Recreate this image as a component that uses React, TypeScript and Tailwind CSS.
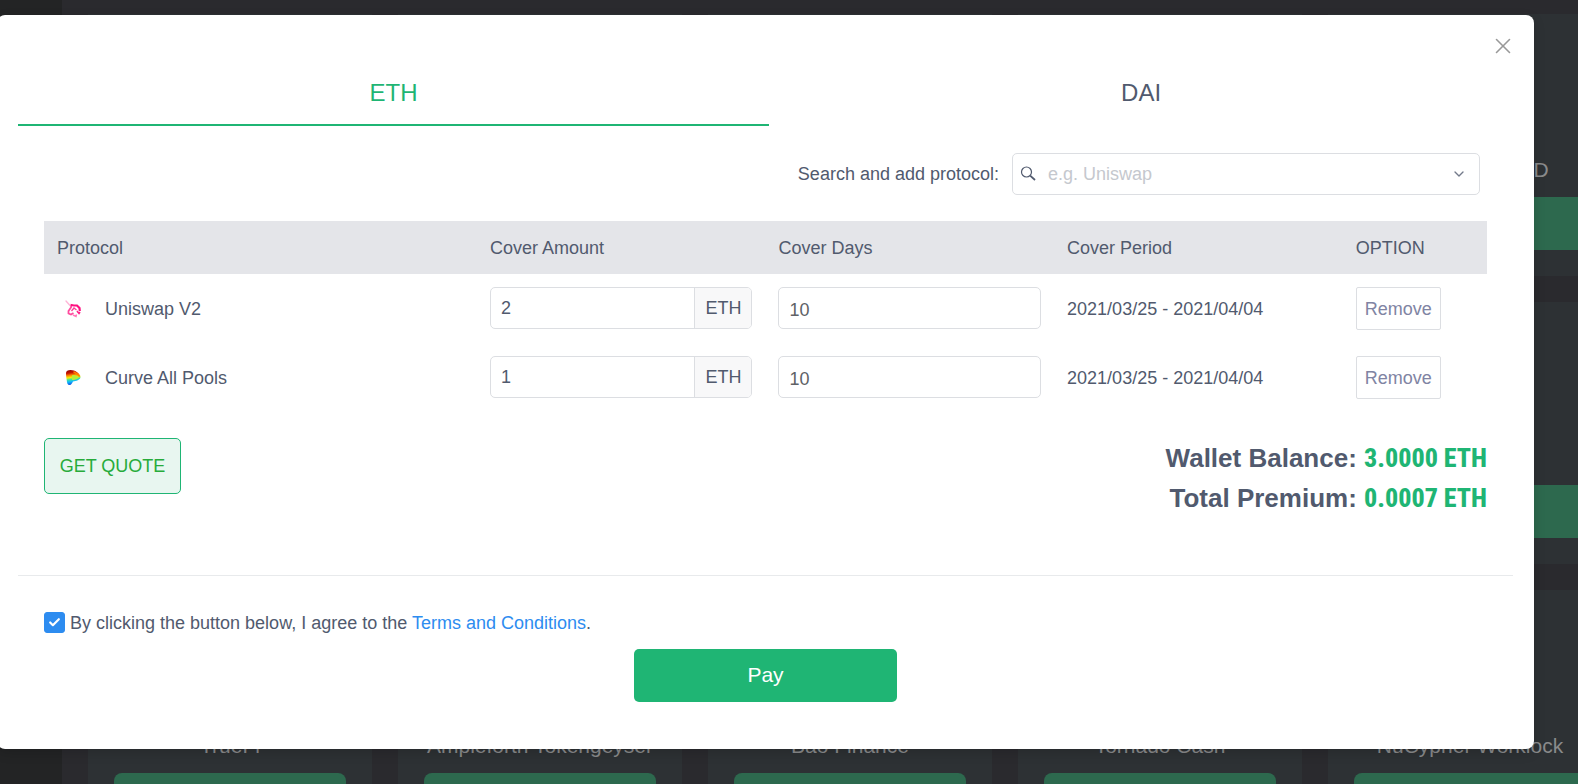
import { useState } from "react";
import { Check, ChevronDown, X } from "lucide-react";

const UniswapLogo = () => (
  <svg className="h-5 w-5 shrink-0" viewBox="0 0 20 20" fill="none" aria-hidden="true">
    <path d="M2 2 6 6.500" stroke="#ffb3d6" strokeWidth="1.300" strokeLinecap="round" />
    <path d="M7.500 5 7 8.500 4.500 12 4.500 14.500 7 15.500 9.500 14" stroke="#ff4a9e" strokeWidth="1.800" />
    <path d="M7 6 10 6.500 13 6.500 15.500 9 15.800 12" stroke="#ff0f80" strokeWidth="2.200" />
    <path d="M7.500 12 10 9 12.500 11" stroke="#ff3a96" strokeWidth="1.300" />
    <path d="M9 16 12 17.500 12.500 15.500" stroke="#ff7dbb" strokeWidth="1.500" />
    <path d="M13 12 15 14.500 16 13" stroke="#ff1d88" strokeWidth="1.600" />
  </svg>
);

const CurveLogo = () => (
  <svg className="h-5 w-5 shrink-0" viewBox="0 0 20 20" fill="none" aria-hidden="true">
    <defs>
      <linearGradient id="curve-body" x1="0.1" y1="0" x2="0.25" y2="1">
        <stop offset="0" stopColor="#8c0000" />
        <stop offset="0.22" stopColor="#c81400" />
        <stop offset="0.38" stopColor="#ff8a00" />
        <stop offset="0.52" stopColor="#f4f000" />
        <stop offset="0.66" stopColor="#3fe0a0" />
        <stop offset="0.8" stopColor="#10b8ff" />
        <stop offset="1" stopColor="#0b4fe0" />
      </linearGradient>
    </defs>
    <path
      d="M2 5C2 3 4 2 6.500 2C11 2 16.500 5.500 16.500 9C16.500 12 12 13 9 13.500C8 15 7.500 17 5.500 17C3.500 17 3 15 2.700 12C2.300 9.500 2 7 2 5Z"
      fill="url(#curve-body)"
    />
    <path d="M8 7.500C10 6.500 13 7.500 15 9.500C13 11.500 10 12 8 12Z" fill="#b6ee3a" />
    <path d="M9.500 3.800C12 4.800 14.500 6.500 15.700 8.500" stroke="#ff7a00" strokeWidth="1.500" />
  </svg>
);

const SearchIcon = () => (
  <svg className="h-4 w-4 shrink-0" viewBox="0 0 16 16" fill="none" stroke="#515a6e" aria-hidden="true">
    <circle cx="6.500" cy="6" r="5" strokeWidth="1.200" />
    <path d="M10.200 9.700 15 14" strokeWidth="1.800" />
  </svg>
);

const protocols = [
  { id: "uniswap", name: "Uniswap V2", amount: "2", days: "10", period: "2021/03/25 - 2021/04/04", Logo: UniswapLogo },
  { id: "curve", name: "Curve All Pools", amount: "1", days: "10", period: "2021/03/25 - 2021/04/04", Logo: CurveLogo },
];

const cards = [
  "", "", "", "", "mStable - mUSD",
  "", "", "", "", "",
  "TrueFi", "Ampleforth Tokengeyser", "Bao Finance", "Tornado Cash", "NuCypher Worklock",
];

const Backdrop = () => (
  <div className="absolute inset-0 flex overflow-hidden bg-[#2a2a2e]" aria-hidden="true">
    <div className="w-[62px] shrink-0 bg-[#232425]" />
    <div className="grid shrink-0 auto-rows-[262px] grid-cols-[repeat(5,284px)] gap-[26px] px-[26px] pt-[14px]">
      {cards.map((name, i) => (
        <div key={i} className="flex flex-col justify-end bg-[#2d3134] p-[26px]">
          <div className="flex justify-center pb-[15px] text-[21px] leading-6 whitespace-nowrap text-[#898a8b]">
            {name}
          </div>
          <div className="h-[53px] rounded-lg bg-[#2d694e]" />
        </div>
      ))}
    </div>
  </div>
);

const App = () => {
  const [tab, setTab] = useState("ETH");
  const [agreed, setAgreed] = useState(true);

  return (
    <div className="relative min-h-screen overflow-hidden font-['Liberation_Sans',Arial,sans-serif] text-lg text-[#515a6e]">
      <Backdrop />

      <div
        role="dialog"
        aria-label="Buy cover"
        className="relative mt-[15px] mr-[44px] -ml-[3px] rounded-lg bg-white px-[21px] pt-[47px] pb-[47px] shadow-[0_4px_12px_rgba(0,0,0,0.15)]"
      >
        <button type="button" aria-label="Close" className="absolute top-[18px] right-[18px] text-[#999999]">
          <X className="h-[26px] w-[26px]" strokeWidth={1.5} />
        </button>

        {/* Currency tabs */}
        <div className="grid grid-cols-[101fr_100fr]" role="tablist">
          {["ETH", "DAI"].map((name) => (
            <button
              key={name}
              type="button"
              role="tab"
              aria-selected={tab === name}
              onClick={() => setTab(name)}
              className={
                tab === name
                  ? "h-16 border-b-2 border-[#1fb574] text-2xl text-[#1fb574]"
                  : "h-16 border-b-2 border-transparent text-2xl"
              }
            >
              {name}
            </button>
          ))}
        </div>

        <div className="px-[26px]">
          <div className="mt-[27px] flex items-center justify-end gap-[13px] pr-[7px]">
            <label htmlFor="protocol-search">Search and add protocol:</label>
            <div className="flex h-[42px] w-[468px] items-center rounded-[5px] border border-[#dcdee2] px-[7px]">
              <SearchIcon />
              <input
                id="protocol-search"
                type="text"
                placeholder="e.g. Uniswap"
                className="min-w-0 flex-1 px-3 outline-none placeholder:text-[#c5c8ce]"
              />
              <button type="button" aria-label="Show protocols" className="px-[5px] text-[#737a8a]">
                <ChevronDown className="h-4 w-4" strokeWidth={2} />
              </button>
            </div>
          </div>

          <table className="mt-[26px] w-full table-fixed text-left">
            <thead>
              <tr className="h-[53px] bg-[#e4e5e9]">
                <th className="w-[30%] px-[13px] font-normal">Protocol</th>
                <th className="w-[20%] px-[13px] font-normal">Cover Amount</th>
                <th className="w-[20%] px-[13px] font-normal">Cover Days</th>
                <th className="w-[20%] px-[13px] font-normal">Cover Period</th>
                <th className="w-[10%] px-[13px] font-normal">OPTION</th>
              </tr>
            </thead>
            <tbody>
              {protocols.map(({ id, name, amount, days, period, Logo }) => (
                <tr key={id} className="h-[69px]">
                  <td className="px-[13px]">
                    <div className="flex items-center gap-[21px] pl-[7px]">
                      <Logo />
                      {name}
                    </div>
                  </td>
                  <td className="px-[13px] pt-[13px] align-top">
                    <div className="flex h-[42px] overflow-hidden rounded-[5px] border border-[#dcdee2]">
                      <input
                        type="text"
                        aria-label={`${name} cover amount`}
                        defaultValue={amount}
                        className="min-w-0 flex-1 px-[10px] outline-none"
                      />
                      <span className="flex items-center border-l border-[#dcdee2] bg-[#f8f8f9] px-[10px]">ETH</span>
                    </div>
                  </td>
                  <td className="px-[13px] pt-[13px] align-top">
                    <input
                      type="text"
                      aria-label={`${name} cover days`}
                      defaultValue={days}
                      className="block h-[42px] w-full rounded-[5px] border border-[#dcdee2] px-[10px] pt-1 text-[#606266] outline-none"
                    />
                  </td>
                  <td className="px-[13px]">{period}</td>
                  <td className="px-[13px] pt-[13px] align-top">
                    <button
                      type="button"
                      className="block h-[43px] rounded-xs border border-[#dcdee2] px-2 text-[#8084a3]"
                    >
                      Remove
                    </button>
                  </td>
                </tr>
              ))}
            </tbody>
          </table>

          <div className="mt-[26px] flex items-start justify-between">
            <button
              type="button"
              className="h-[56px] w-[137px] rounded-[5px] border border-[#1fb574] bg-[#e8f6f0] text-[#27ab3b]"
            >
              GET QUOTE
            </button>
            <div className="text-right text-[26px] leading-10 font-bold">
              <div>
                Wallet Balance:{" "}
                <span className="font-['Liberation_Sans_Narrow','Roboto_Condensed',Roboto,sans-serif] font-extrabold text-[#1fb574]">3.0000 ETH</span>
              </div>
              <div>
                Total Premium:{" "}
                <span className="font-['Liberation_Sans_Narrow','Roboto_Condensed',Roboto,sans-serif] font-extrabold text-[#1fb574]">0.0007 ETH</span>
              </div>
            </div>
          </div>
        </div>

        <hr className="mt-[57px] border-[#e8eaec]" />

        <div className="px-[26px]">
          <div className="mt-[36px] flex h-[21px] items-center gap-[5px]">
            <span className="grid h-[21px] w-[21px] place-items-center">
              <input
                id="agree"
                type="checkbox"
                checked={agreed}
                onChange={(e) => setAgreed(e.target.checked)}
                className="col-start-1 row-start-1 h-[21px] w-[21px] appearance-none rounded-[3px] border border-[#dcdee2] checked:border-[#2d8cf0] checked:bg-[#2d8cf0]"
              />
              {agreed && (
                <Check className="pointer-events-none col-start-1 row-start-1 h-[13px] w-[13px] text-white" strokeWidth={4} />
              )}
            </span>
            <label htmlFor="agree">
              By clicking the button below, I agree to the{" "}
              <a href="#terms" className="text-[#2d8cf0]">
                Terms and Conditions
              </a>
              .
            </label>
          </div>

          <button
            type="button"
            className="mx-auto mt-4 block h-[53px] w-[263px] rounded-[5px] bg-[#1fb574] text-[21px] text-white"
          >
            Pay
          </button>
        </div>
      </div>
    </div>
  );
};

export default App;
